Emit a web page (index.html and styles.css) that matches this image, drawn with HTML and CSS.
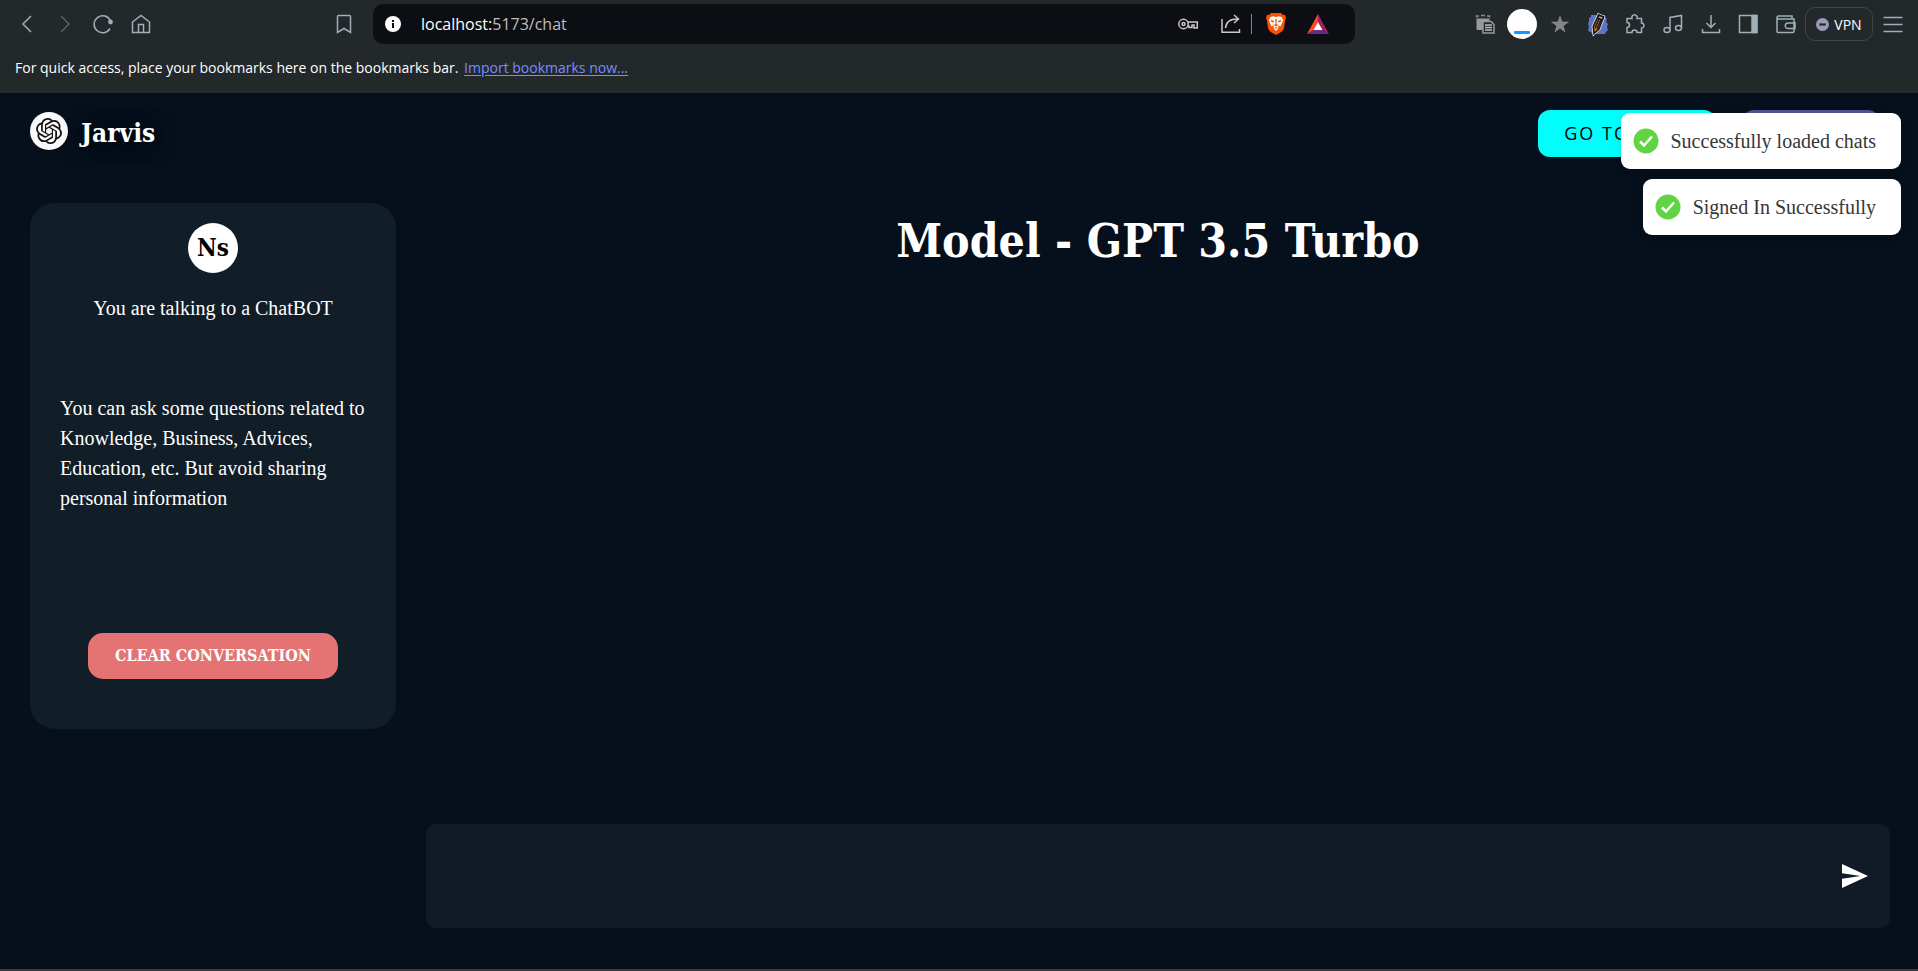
FILE: index.html
```html
<!DOCTYPE html>
<html lang="en">
<head>
<meta charset="utf-8">
<title>Jarvis</title>
<link rel="stylesheet" href="styles.css">
</head>
<body>
<div class="browser">
  <div class="toolbar">
    <div class="nav">
      <button class="tool" aria-label="Back"><svg viewBox="0 0 20 20"><path d="M14 2 6 10l8 8"/></svg></button>
      <button class="tool dim" aria-label="Forward"><svg viewBox="0 0 20 20"><path d="m6 2 8 8-8 8"/></svg></button>
      <button class="tool" aria-label="Reload"><svg viewBox="0 0 20 20"><path d="M17 14.500A8.500 8.500 0 1 1 17.500 7"/><circle cx="17.500" cy="8" r="2.400" fill="currentColor" stroke="none"/></svg></button>
      <button class="tool" aria-label="Home"><svg viewBox="0 0 20 20"><path d="M1.500 8 10 1.500 18.500 8v10.500h-17zM7.500 18.500v-8h5v8"/></svg></button>
      <button class="tool save" aria-label="Bookmark this page"><svg viewBox="0 0 20 20"><path d="M4.500 1.500h11a1 1 0 0 1 1 1v16L10 14.500 3.500 18.500v-16a1 1 0 0 1 1-1z"/></svg></button>
    </div>
    <div class="address">
      <svg class="info" viewBox="0 0 16 16"><circle cx="8" cy="8" r="8" fill="#fff"/><path d="M7 4h2v2H7zM7 7h2v5H7z" fill="#0d0e13"/></svg>
      <span class="url">localhost:<span class="path">5173/chat</span></span>
      <button class="tool pale" aria-label="Passwords"><svg viewBox="0 0 20 20"><circle cx="5.500" cy="10" r="4.700"/><circle cx="5.500" cy="10" r="1.500"/><path d="M10 8h9.300v6H16v-3h-2v2.500h-3V12h-1"/></svg></button>
      <button class="tool pale share" aria-label="Share"><svg viewBox="0 0 20 20"><path d="M1 5v13.200h17.500V15M4.500 14c.5-6 4-9 12-9M13 1l4.500 4L13 9"/></svg></button>
      <span class="divider"></span>
      <button class="tool brave" aria-label="Shields"><svg viewBox="0 0 20 22"><path d="M5 0h10l2 2 2-.3 1 3.300-.8 2L18 15c-.4 2-2 3.300-4 4.700L10 22l-4-2.300C4 18.300 2.400 17 2 15L.8 7 0 5l1-3.300L3 2z" fill="#ff5000" stroke="none"/><path d="M7 3.200 10 4l3-.8 2.500.8L17.200 7l-1.500 4-1.200 2.500L12 12.300l.6 2.700L10 18l-2.600-3 .6-2.700-2.500 1.200L4.300 11 2.800 7l1.700-3z" fill="#fff" stroke="none"/><path d="m5 7 3.200.9-.7 1.600L5.200 9zM15 7l-3.200.9.7 1.600 2.300-.5zM9.200 6h1.600l-.3 5 1.600 1L10 13.600 7.900 12l1.600-1zM8 15l2-1 2 1-2 .8z" fill="#ff5000" stroke="none"/></svg></button>
      <button class="tool reward" aria-label="Rewards"><svg viewBox="0 0 22 20"><path d="M11 0 0 20l7-4 4-8z" fill="#ff4724" stroke="none"/><path d="m11 0 11 20-7-4-4-8z" fill="#9e1f63" stroke="none"/><path d="M0 20h22l-7-4H7z" fill="#662d91" stroke="none"/><path d="m11 8 4.500 8h-9z" fill="#fff" stroke="none"/></svg></button>
    </div>
    <div class="extras">
      <div class="extensions">
        <button class="tool" aria-label="Clipboard"><svg viewBox="0 0 20 20"><path d="M1.500 4.500h13V7H8v9H2.500a1 1 0 0 1-1-1z" fill="#999" stroke="none"/><path d="M1.500 3.500V2H4M6 1.500h4M12 2h2.500v1.500" stroke="#888"/><path d="M8 7.500h8l3 3v8.500H8z" fill="#23282b" stroke="#999"/><path d="M10 11h7M10 13.500h7M10 16h7" stroke="#bbb"/></svg></button>
        <button class="tool profile" aria-label="Profile"><svg viewBox="0 0 30 30"><circle cx="15" cy="15" r="15" fill="#fff" stroke="none"/><rect x="7" y="22" width="16" height="3" rx="1" fill="#1597ff" stroke="none"/></svg></button>
        <button class="tool" aria-label="Star"><svg viewBox="0 0 20 20"><path d="m10 1 2.200 6.500 7 .2-5.600 4.200 2 6.900L10 14.600l-5.600 4.200 2-6.900L.8 7.700l7-.2z" fill="#858585" stroke="none"/></svg></button>
        <button class="tool" aria-label="Pencil"><svg viewBox="0 0 20 20"><path d="M3 1h14v2l2 2-1 3 2 2-1 3 1 3-2 2-1 2H4l-1-2-3-1 1-4-1-3 1-3 0-3 2-1z" fill="#5f73c9" stroke="none"/><path d="m10.500 1 5 2-4.500 12-5 4.500-.8-7z" fill="#fff" stroke="#fff" stroke-width="3"/><path d="m10.500 1 5 2-4.500 12-5 4.500-.8-7z" fill="#c87420" stroke="#171717" stroke-width="1.600"/><path d="m10.500 1 5 2-1 3-5-2z" fill="#e894b4" stroke="#171717"/><path d="m11 5-4 9M13 6 9 15" stroke="#171717"/></svg></button>
        <button class="tool" aria-label="Extensions"><svg viewBox="0 0 20 20"><path d="M2 4.500h5a2.700 2.700 0 1 1 5 0h4.500V9a2.500 2.500 0 1 1 0 5v4.500H12a2.500 2.500 0 0 0-5 0H2v-5a2.500 2.500 0 0 0 0-5z"/></svg></button>
        <button class="tool" aria-label="Media"><svg viewBox="0 0 20 20"><ellipse cx="4" cy="16" rx="3" ry="2.500"/><ellipse cx="15.500" cy="14" rx="3" ry="2.500"/><path d="M7 16V3.500L18.500 1.500V14"/></svg></button>
        <button class="tool" aria-label="Downloads"><svg viewBox="0 0 20 20"><path d="M10 1v12M5.500 9l4.500 4.500L14.500 9M1.500 15v3.500h17V15"/></svg></button>
        <button class="tool" aria-label="Side panel"><svg viewBox="0 0 20 20"><rect x="1.500" y="1.500" width="17" height="17"/><path d="M14 1.500h5v17h-5z" fill="currentColor"/></svg></button>
        <button class="tool" aria-label="Wallet"><svg viewBox="0 0 20 20"><path d="M16 5V2H2.500a1.500 1.500 0 0 0 0 3H18v12.500a1 1 0 0 1-1 1H2a1 1 0 0 1-1-1v-14M19 9h-7a2.500 2.500 0 0 0 0 5.500h7z"/></svg></button>
      </div>
      <button class="vpn"><svg viewBox="0 0 12 12"><circle cx="6" cy="6" r="6" fill="#9c9ab5"/><path d="M3 6h6" stroke="#23282b" stroke-width="2"/></svg>VPN</button>
      <button class="tool menu" aria-label="Menu"><svg viewBox="0 0 20 20"><path d="M.5 3.500h19M.5 10.500h19M.5 17.500h19"/></svg></button>
    </div>
  </div>
  <div class="bookmarks">For quick access, place your bookmarks here on the bookmarks bar. <a href="#">Import bookmarks now...</a></div>
</div>

<div class="app">
  <header class="header">
    <a class="brand" href="#">
      <svg class="logo" viewBox="0 0 38 38"><circle cx="19" cy="19" r="19" fill="#faf8fa"/><g transform="translate(6 6) scale(1.084)" fill="#111"><path d="M22.282 9.821a5.985 5.985 0 0 0-.516-4.910 6.046 6.046 0 0 0-6.510-2.900A6.065 6.065 0 0 0 4.981 4.182a5.985 5.985 0 0 0-3.998 2.900 6.046 6.046 0 0 0 .743 7.097 5.980 5.980 0 0 0 .511 4.911 6.051 6.051 0 0 0 6.515 2.900A5.985 5.985 0 0 0 13.260 24a6.056 6.056 0 0 0 5.772-4.206 5.990 5.990 0 0 0 3.998-2.900 6.056 6.056 0 0 0-.748-7.073zM13.260 22.430a4.476 4.476 0 0 1-2.876-1.041l.141-.080 4.779-2.758a.795.795 0 0 0 .393-.681v-6.737l2.020 1.169a.071.071 0 0 1 .038.052v5.583a4.504 4.504 0 0 1-4.495 4.493zM3.600 18.304a4.471 4.471 0 0 1-.535-3.014l.142.085 4.783 2.759a.771.771 0 0 0 .780 0l5.843-3.369v2.332a.080.080 0 0 1-.033.062L9.740 19.950a4.500 4.500 0 0 1-6.140-1.646zM2.341 7.896a4.485 4.485 0 0 1 2.365-1.973V11.600a.766.766 0 0 0 .388.677l5.815 3.354-2.020 1.169a.076.076 0 0 1-.071 0l-4.831-2.786A4.504 4.504 0 0 1 2.341 7.872zm16.596 3.856-5.833-3.388L15.119 7.200a.076.076 0 0 1 .071 0l4.831 2.791a4.494 4.494 0 0 1-.677 8.105v-5.678a.790.790 0 0 0-.407-.667zm2.011-3.024-.142-.085-4.774-2.782a.776.776 0 0 0-.785 0L9.409 9.230V6.897a.066.066 0 0 1 .028-.061l4.831-2.787a4.499 4.499 0 0 1 6.680 4.660zM8.307 12.863l-2.020-1.164a.080.080 0 0 1-.038-.057V6.075a4.499 4.499 0 0 1 7.376-3.454l-.142.081-4.779 2.758a.795.795 0 0 0-.393.681zm1.098-2.365 2.602-1.500 2.607 1.500v2.999l-2.598 1.500-2.607-1.500z"/></g></svg>
      <span class="name">Jarvis</span>
    </a>
    <nav class="links">
      <a class="link chat" href="#">GO TO CHAT</a>
      <a class="link logout" href="#">LOGOUT</a>
    </nav>
  </header>
  <div class="content">
    <aside class="side">
      <div class="avatar">Ns</div>
      <p class="intro">You are talking to a ChatBOT</p>
      <p class="advice">You can ask some questions related to Knowledge, Business, Advices, Education, etc. But avoid sharing personal information</p>
      <button class="clear">CLEAR CONVERSATION</button>
    </aside>
    <main class="main">
      <h1 class="title">Model - GPT 3.5 Turbo</h1>
      <form class="composer">
        <input class="message" type="text" aria-label="Message">
        <button class="send" type="button" aria-label="Send"><svg viewBox="48 64 416 384"><path d="M48 448l416-192L48 64v149.333L346 256 48 298.667z" fill="#fff"/></svg></button>
      </form>
    </main>
  </div>
</div>

<div class="toasts" role="status">
  <div class="toast"><svg viewBox="0 0 26 26"><circle cx="13" cy="13" r="12.500" fill="#61d345"/><path d="m7 13.500 4 4 8-9" fill="none" stroke="#fff" stroke-width="2.500"/></svg>Successfully loaded chats</div>
  <div class="toast"><svg viewBox="0 0 26 26"><circle cx="13" cy="13" r="12.500" fill="#61d345"/><path d="m7 13.500 4 4 8-9" fill="none" stroke="#fff" stroke-width="2.500"/></svg>Signed In Successfully</div>
</div>
</body>
</html>
```
FILE: styles.css
```css
* { box-sizing: border-box; }

body {
  margin: 0;
  min-height: 100vh;
  display: flex;
  flex-direction: column;
  background: #05101c;
  color: #fff;
  font-family: "Liberation Serif", serif;
  font-size: 20px;
}

button { font: inherit; color: inherit; background: none; border: 0; padding: 0; cursor: pointer; }
p, h1 { margin: 0; }

/* Browser bars */
.browser { background: #23282b; font-family: "Open Sans", "Noto Sans", sans-serif; }
.toolbar { display: flex; height: 48px; align-items: center; }
.nav { display: flex; width: 373px; padding: 0 19px 0 17px; gap: 18px; }
.tool { width: 20px; height: 20px; color: #9fb0b8; flex: none; }
.tool svg { display: block; width: 100%; height: 100%; fill: none; stroke: currentColor; stroke-width: 1.5; overflow: visible; }
.dim { color: #566067; }
.save { margin-left: auto; }
.address {
  flex: 1;
  display: flex;
  align-items: center;
  height: 40px;
  padding: 0 26px 0 12px;
  background: #0d0e13;
  border-radius: 10px;
}
.info { width: 16px; height: 16px; }
.url { flex: 1; padding-left: 20px; font-size: 16px; line-height: 24px; }
.path { color: #bdbdbf; }
.pale { color: #c8c8ca; }
.share { margin: 0 10px 0 23px; }
.divider { width: 1px; height: 20px; background: #85868a; }
.brave { height: 22px; margin: 0 21px 0 14px; }
.reward { width: 22px; }
.extras { display: flex; align-items: center; width: 563px; padding: 0 15px 0 111px; }
.extensions { flex: 1; display: grid; grid-template-columns: repeat(9, 1fr); place-items: center; }
.profile { width: 30px; height: 30px; }
.vpn {
  display: flex;
  align-items: center;
  justify-content: center;
  gap: 5px;
  width: 68px;
  height: 34px;
  margin-right: 10px;
  border: 1px solid #3f474b;
  border-radius: 10px;
  font-size: 14px;
}
.vpn svg { width: 13px; height: 13px; }
.bookmarks { height: 45px; padding: 10px 15px; font-size: 14px; line-height: 20px; }
.bookmarks a { color: #7a8cff; margin-left: 2px; text-underline-offset: 2px; }

/* Application */
.app { flex: 1; display: flex; flex-direction: column; padding: 0 28px 41px 30px; border-bottom: 2px solid #3a3a3c; }
.header { display: flex; justify-content: space-between; align-items: flex-start; height: 110px; padding: 17px 10px 0 0; }
.brand { display: flex; align-items: center; gap: 13px; color: #fff; text-decoration: none; }
.logo { width: 38px; height: 38px; }
.name {
  padding-top: 4px;
  font: 700 26px/38px "Roboto Slab", "DejaVu Serif Condensed", "DejaVu Serif", serif;
  text-shadow: 2px 2px 20px #000;
}
.links { display: flex; gap: 26px; }
.link {
  padding: 12px 26px;
  border-radius: 12px;
  font: 500 18px/23px "Open Sans", "Noto Sans", sans-serif;
  letter-spacing: 2px;
  text-decoration: none;
}
.chat { background: #00fffc; color: #000; }
.logout { background: #51538f; color: #fff; }

.content { flex: 1; display: flex; gap: 30px; align-items: stretch; }
.side {
  align-self: flex-start;
  flex: none;
  display: flex;
  flex-direction: column;
  align-items: center;
  width: 366px;
  padding: 20px 30px 50px;
  border-radius: 25px;
  background: #111d27;
  line-height: 30px;
}
.avatar {
  width: 50px;
  height: 50px;
  border-radius: 50%;
  background: #fff;
  color: #000;
  text-align: center;
  font: 700 24px/50px "Roboto Slab", "DejaVu Serif Condensed", "DejaVu Serif", serif;
}
.intro { margin: 20px 0 70px; }
.advice { margin-bottom: 120px; }
.clear {
  width: 250px;
  height: 46px;
  border-radius: 15px;
  background: #e57373;
  font: 700 16px/24px "Roboto Slab", "DejaVu Serif Condensed", "DejaVu Serif", serif;
}
.main { flex: 1; display: flex; flex-direction: column; justify-content: space-between; }
.title {
  text-align: center;
  font: 700 46px/76px "Roboto Slab", "DejaVu Serif Condensed", "DejaVu Serif", serif;
}
.composer { display: flex; align-items: center; height: 104px; padding-right: 22px; border-radius: 10px; background: #111b27; }
.message { flex: 1; height: 100%; padding: 0 30px; border: 0; outline: 0; background: none; color: #fff; font: inherit; }
.send { width: 26px; height: 24px; }
.send svg { display: block; width: 100%; height: 100%; }

/* Notifications float above the page */
.toasts { position: absolute; top: 113px; right: 17px; display: flex; flex-direction: column; align-items: flex-end; gap: 10px; }
.toast {
  display: flex;
  align-items: center;
  gap: 12px;
  height: 56px;
  padding: 0 25px 0 12px;
  border-radius: 9px;
  background: #fff;
  color: #363636;
  box-shadow: 0 3px 10px rgba(0, 0, 0, .1);
}
.toast svg { width: 26px; height: 26px; }
```
